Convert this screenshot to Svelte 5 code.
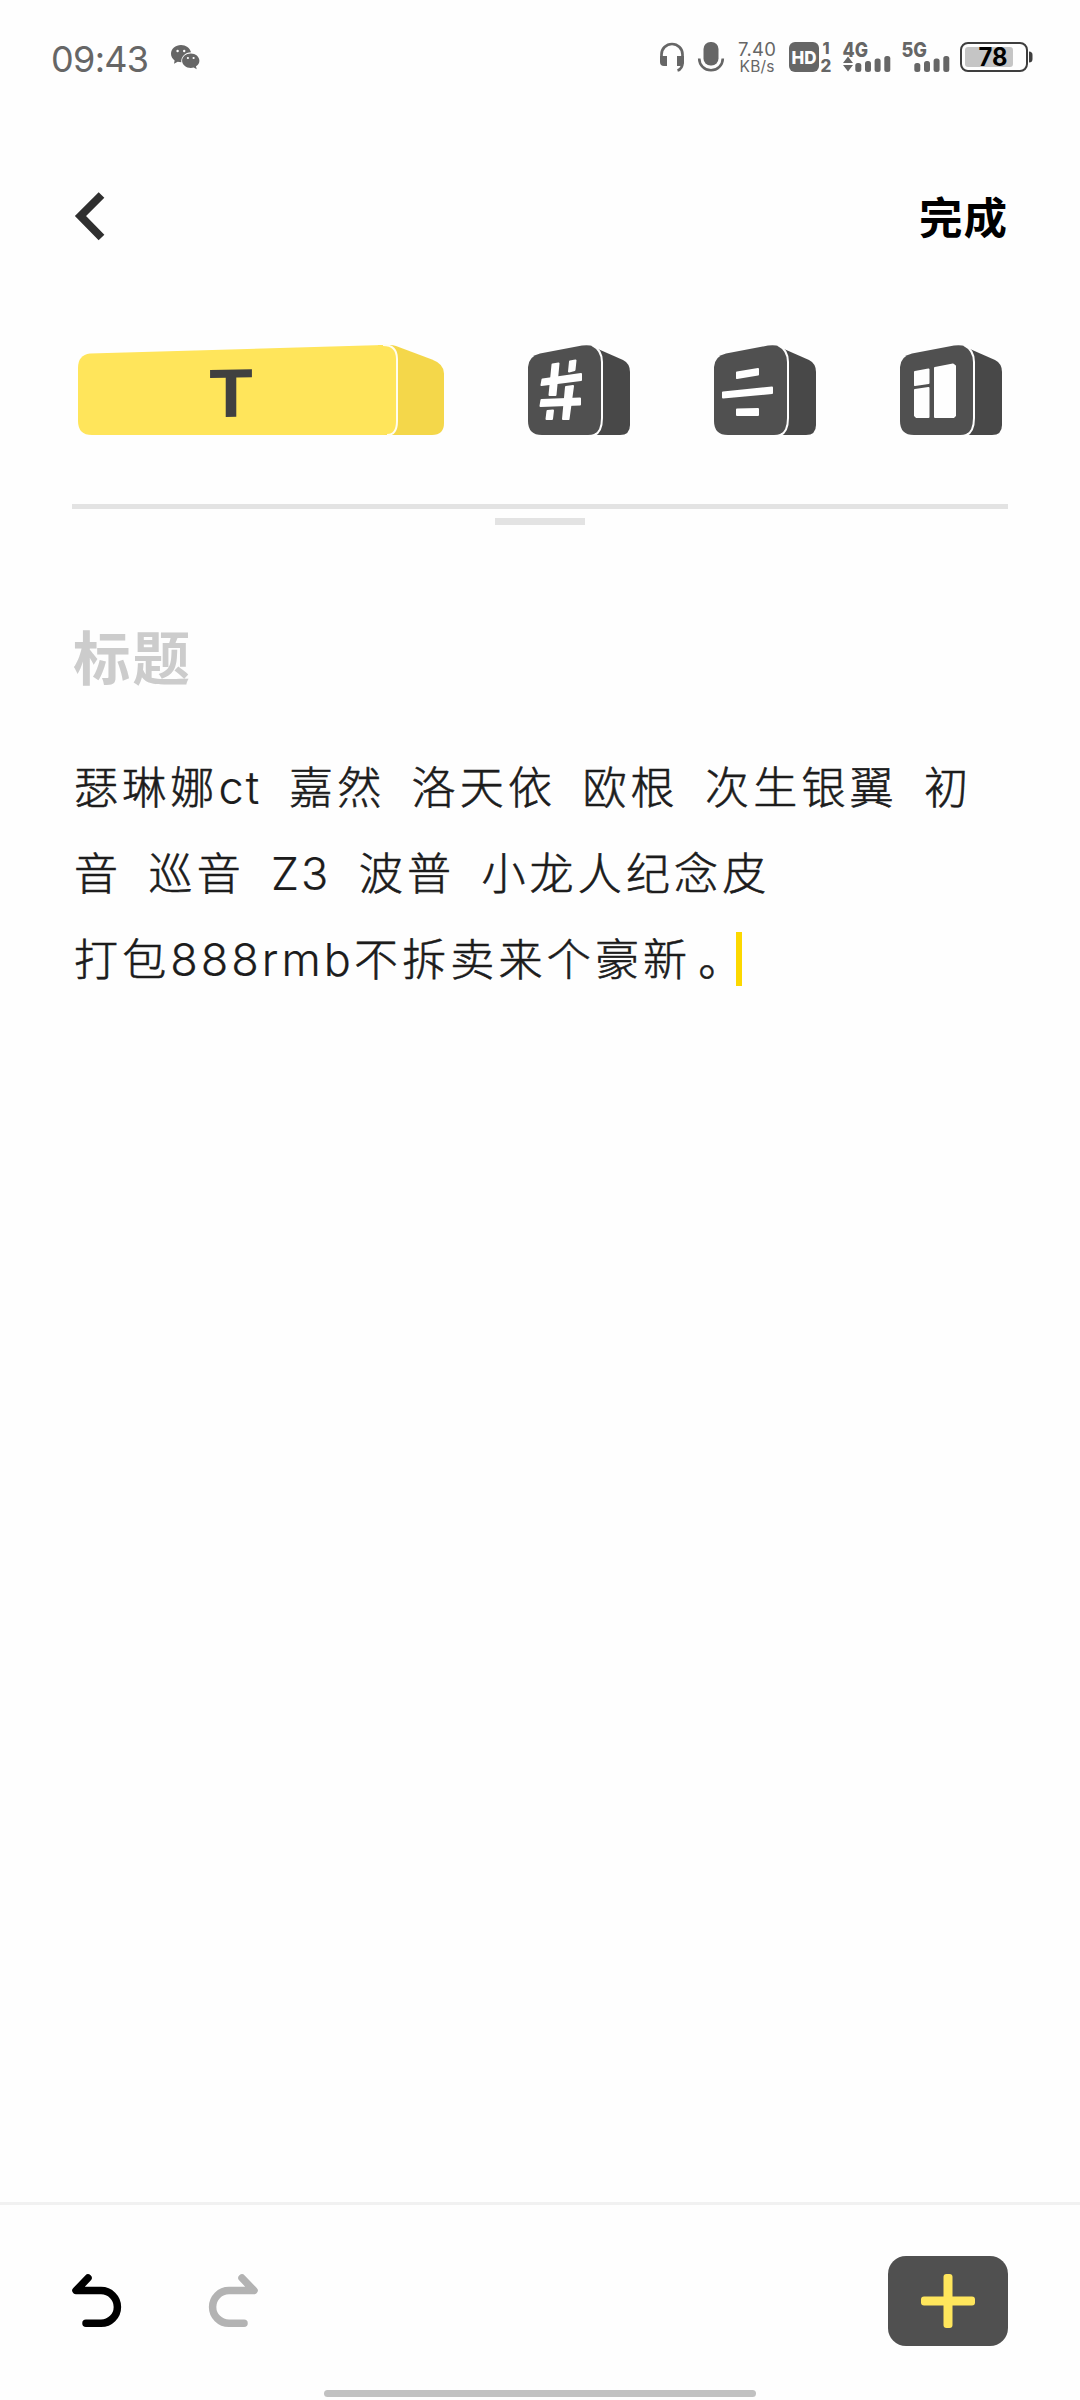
<script lang="ts">
	interface Signal {
		label: string;
		arrows: boolean;
	}

	const signals: Signal[] = [
		{ label: '4G', arrows: true },
		{ label: '5G', arrows: false }
	];

	const blocks = ['tag', 'align', 'layout'];

	let title = $state('');
	let battery = $state(78);
</script>

<div class="screen">
	<header class="status">
		<span class="time">09:43</span>
		<svg class="wechat" width="29" height="25" viewBox="0 0 29 25">
			<path
				d="M10 0C4.500 0 0 3.900 0 8.800c0 2.700 1.400 5 3.600 6.600L3 18.800l3.700-2c1.100.3 2.200.5 3.600.5C9.800 11.500 14.200 7.300 20 7.200 18.900 3 14.900 0 10 0z"
			/>
			<path
				d="M19.800 8.500c-4.800 0-8.700 3.200-8.700 7.200s3.900 7.200 8.700 7.200c1 0 2-.1 2.900-.4l3 1.700-.7-2.900c2.100-1.300 3.400-3.300 3.400-5.600 0-4-3.800-7.200-8.600-7.200z"
			/>
			<g class="eyes">
				<circle cx="6.600" cy="6" r="1.200" />
				<circle cx="13.200" cy="6" r="1.200" />
				<circle cx="16.900" cy="13" r="1.100" />
				<circle cx="22.600" cy="13" r="1.100" />
			</g>
		</svg>

		<div class="indicators">
			<svg width="24" height="30" viewBox="0 0 24 30">
				<path
					d="M1.500 20v-7.500a10.500 10.500 0 0 1 21 0V20c0 5-1.500 7.500-5 8.500"
					fill="none"
					stroke="#666"
					stroke-width="2.700"
				/>
				<path d="M0 14h7v10H4a4 4 0 0 1-4-4zM17 14h7v6a4 4 0 0 1-4 4h-3z" />
			</svg>
			<svg class="mic" width="26" height="30" viewBox="0 0 26 30">
				<rect x="5.500" y="0" width="15" height="23.500" rx="7" />
				<path d="M1.200 16.500a11.800 11.800 0 0 0 23.600 0" fill="none" stroke="#666" stroke-width="2.600" />
			</svg>
			<svg class="speed" width="38" height="30" viewBox="0 0 38 30">
				<text x="0" y="14" font-size="18.500" textLength="38">7.40</text>
				<text x="1.500" y="29.700" font-size="15.500" textLength="35">KB/s</text>
			</svg>
			<svg class="hd" width="43" height="30" viewBox="0 0 43 30">
				<rect width="30" height="30" rx="6" />
				<text class="inverse" x="2.500" y="21.500" font-size="18" textLength="25" lengthAdjust="spacingAndGlyphs">HD</text>
				<text x="33.500" y="12" font-size="16">1</text>
				<text x="31.500" y="30" font-size="17">2</text>
			</svg>
			{#each signals as signal}
				<svg class="signal" width="48" height="30" viewBox="0 0 48 30">
					<text x="-.5" y="14.800" font-size="20" textLength="25.500" lengthAdjust="spacingAndGlyphs">{signal.label}</text>
					{#if signal.arrows}
						<path d="M5 14.500l5 6.500H0zM5 29.500l5-6.500H0z" />
					{/if}
					<rect x="12.300" y="21" width="6" height="9" rx="2.500" />
					<rect x="22" y="19" width="6" height="11" rx="2.500" />
					<rect x="31.600" y="16.500" width="6" height="13.500" rx="2.500" />
					<rect x="41.300" y="14" width="6" height="16" rx="2.500" />
				</svg>
			{/each}
			<svg class="battery" width="73" height="30" viewBox="0 0 73 30">
				<rect x="1" y="1" width="66" height="28" rx="7" fill="#fefefe" stroke="#3e3e3e" stroke-width="2" />
				<path d="M69 9.500a3.500 3.500 0 0 1 3.500 3.500v4a3.500 3.500 0 0 1-3.500 3.500z" fill="#3e3e3e" />
				<rect x="5" y="5" width={battery * 0.615} height="20" rx="3" fill="#c5c5c5" />
				<text x="18.500" y="24.200" font-size="25" textLength="29" lengthAdjust="spacingAndGlyphs">{battery}</text>
			</svg>
		</div>
	</header>

	<nav class="topbar">
		<button aria-label="返回">
			<svg width="34" height="50" viewBox="0 0 34 50">
				<path d="M29.500 4L8.500 25l21 21.500" fill="none" stroke="#2f2f2f" stroke-width="8" />
			</svg>
		</button>
		<button class="done">完成</button>
	</nav>

	<div class="blocks">
		<svg class="wide" width="366" height="90" viewBox="0 0 366 90">
			<path
				d="M300 0h12q3 0 6 1l36 13.500q12 4.500 12 14V78q0 12-12 12h-54z"
				fill="#f4d74a"
			/>
			<path
				d="M12 8.500L305 0q14 0 14 14v62q0 14-14 14H14Q0 90 0 76V23Q0 10 12 8.500z"
				fill="#ffe55b"
			/>
			<path
				d="M305 0q14 0 14 14v62q0 14-10 14"
				fill="none"
				stroke="#fffdf0"
				stroke-width="2"
			/>
			<text x="129.500" y="74.500" textLength="47" lengthAdjust="spacingAndGlyphs" transform="skewY(-1)">T</text>
		</svg>

		{#each blocks as block}
			<svg width="102" height="90" viewBox="0 0 102 90">
				<path d="M70 4l25 11q7 3.500 7 12v53q0 10-10 10H68z" fill="#484848" />
				<path
					d="M12 8.500L54 .5Q74-2 74 16v58q0 16-14 16H14Q0 90 0 76V22Q1 11 12 8.500z"
					fill="#505050"
				/>
				<path
					d="M64 0Q74 5 74 17v56q0 14-8 17.500"
					fill="none"
					stroke="#fefefe"
					stroke-width="2"
				/>
				{#if block === 'tag'}
					<g fill="#fefefe" stroke="#fefefe" stroke-width="2" stroke-linejoin="round">
						<path d="M24.500 19.500l6-1-3 31.500h-6z" />
						<path d="M42 16.500l5.500-1-1 9.500-5.500 1.500z" />
						<path d="M38 42l7-1-4.500 33h-5.500z" />
						<path d="M19.500 66l5.500-.5-1 8.500h-5.500z" />
						<path d="M14.500 34.500L53 29v6l-39.500 5z" />
						<path d="M13.500 55L52 53.500v6l-39.500 1.500z" />
					</g>
				{:else if block === 'align'}
					<g fill="#fefefe" stroke="#fefefe" stroke-width="2" stroke-linejoin="round">
						<path d="M23 27.500l21-3.500v5.500l-21 3.500z" />
						<path d="M9 47.500L58 42.500v5.500L9 52.500z" />
						<path d="M23 64.500l21-.5v6H23z" />
					</g>
				{:else}
					<g fill="#fefefe" stroke="#fefefe" stroke-width="2" stroke-linejoin="round">
						<path d="M15 27l13.500-2.500V38L15 40z" />
						<path d="M15 45l13.500-2v29H16.500L15 70.500z" />
						<path d="M35 23l18-3.500 2 1.500v49.500L53.500 72H35z" />
					</g>
				{/if}
			</svg>
		{/each}
	</div>

	<div class="divider"></div>
	<div class="handle"></div>

	<main>
		<input class="title" placeholder="标题" bind:value={title} />
		<div class="note">
			<p>瑟琳娜<span class="latin ct">ct</span>{'  嘉然  洛天依  欧根  次生银翼  初'}</p>
			<p>{'音  巡音  '}<span class="latin z">Z3</span>{'  波普  小龙人纪念皮'}</p>
			<p>打包<span class="latin rmb">888rmb</span>不拆卖来个豪新<span class="stop">。</span><i class="caret"></i></p>
		</div>
	</main>

	<footer>
		<button aria-label="撤销">
			<svg width="49" height="54" viewBox="0 0 49 54">
				<path d="M16 4L4 16.500h25a16.300 16.300 0 0 1 0 32.800H14" class="arrow" />
			</svg>
		</button>
		<button class="redo" aria-label="重做">
			<svg width="49" height="54" viewBox="0 0 49 54">
				<path d="M33 4l12 12.500H20a16.300 16.300 0 0 0 0 32.800h15" class="arrow" />
			</svg>
		</button>
		<button class="add" aria-label="添加">
			<svg width="54" height="54" viewBox="0 0 54 54">
				<rect x="22.500" width="9" height="54" rx="3" />
				<rect y="22.500" width="54" height="9" rx="3" />
			</svg>
		</button>
	</footer>
	<div class="home"></div>
</div>

<style>
	:global(body) {
		margin: 0;
		background: #fefefe;
	}

	.screen {
		display: flex;
		flex-direction: column;
		box-sizing: border-box;
		width: 1080px;
		height: 2400px;
		background: #fefefe;
		font-family: 'Noto Sans CJK SC', sans-serif;
	}

	svg {
		display: block;
		flex: none;
		overflow: visible;
	}

	button {
		border: 0;
		padding: 0;
		background: none;
		font: inherit;
		color: inherit;
	}

	.status {
		display: flex;
		align-items: flex-start;
		box-sizing: border-box;
		height: 116px;
		padding: 42px 47px 0 51px;
		color: #666;
		fill: #666;
		font-family: Inter, sans-serif;
	}

	.time {
		width: 120px;
		font-size: 36px;
		line-height: 34px;
		letter-spacing: -0.7px;
	}

	.wechat {
		margin-top: 3px;
	}

	.eyes {
		fill: #fefefe;
	}

	.indicators {
		display: flex;
		margin-left: auto;
	}

	.mic {
		margin-left: 14px;
	}

	.speed {
		margin-left: 14px;
	}

	.hd {
		margin-left: 13px;
		font-weight: 800;
	}

	.inverse {
		fill: #fefefe;
	}

	.signal {
		margin-left: 11px;
		font-weight: 800;
	}

	.battery {
		margin-left: 10px;
		font-weight: 700;
	}

	.battery text {
		fill: #000;
	}

	.topbar {
		display: flex;
		align-items: center;
		justify-content: space-between;
		height: 200px;
		padding: 0 72px;
	}

	.done {
		font-size: 43.500px;
		font-weight: 700;
		line-height: 60px;
		letter-spacing: 1px;
		color: #000;
	}

	.blocks {
		display: flex;
		gap: 84px;
		padding: 29px 78px 0;
	}

	.wide text {
		font: 700 65px Inter, sans-serif;
		fill: #404040;
	}

	.divider {
		height: 5px;
		margin: 69px 72px 0;
		background: #e3e3e3;
	}

	.handle {
		width: 90px;
		height: 7px;
		margin: 9px auto 0;
		background: #e3e3e3;
	}

	main {
		flex: 1;
		padding: 90px 71px 0 73px;
	}

	.title {
		display: block;
		width: 100%;
		height: 80px;
		border: 0;
		padding: 0;
		outline: 0;
		background: none;
		font: 700 57.500px 'Noto Sans CJK SC', sans-serif;
		letter-spacing: 2px;
	}

	.title::placeholder {
		color: #ccc;
		opacity: 1;
	}

	.note {
		margin-top: 47px;
		padding-left: 1px;
		font-size: 44px;
		font-weight: 300;
		line-height: 86px;
		letter-spacing: 4.17px;
		word-spacing: -0.75px;
		color: #1c1c1c;
		-webkit-text-stroke: 0.6px #1c1c1c;
	}

	p {
		height: 86px;
		margin: 0;
		white-space: pre;
	}

	.latin {
		display: inline-block;
		font-family: Inter, sans-serif;
		font-size: 45px;
		line-height: 1;
		letter-spacing: 2px;
		-webkit-text-stroke: 0.2px #1c1c1c;
	}

	.ct {
		width: 44.200px;
	}

	.z {
		width: 61.400px;
	}

	.rmb {
		width: 183.700px;
		letter-spacing: 3px;
	}

	.stop {
		margin-left: 7px;
	}

	.caret {
		display: inline-block;
		width: 6px;
		height: 54px;
		margin-left: -10px;
		vertical-align: -10px;
		background: #fcd800;
	}

	footer {
		display: flex;
		align-items: center;
		box-sizing: border-box;
		height: 188px;
		border-top: 3px solid #f1f1f1;
		padding: 7px 72px 0;
	}

	.arrow {
		fill: none;
		stroke: #000;
		stroke-width: 7.5px;
		stroke-linecap: round;
		stroke-linejoin: round;
	}

	.redo {
		margin-left: 88px;
	}

	.redo .arrow {
		stroke: #b3b3b3;
	}

	.add {
		display: flex;
		align-items: center;
		justify-content: center;
		width: 120px;
		height: 90px;
		margin-left: auto;
		border-radius: 18px;
		background: #505050;
		fill: #ffe65c;
	}

	.home {
		width: 432px;
		height: 7px;
		margin: 0 auto 3px;
		border-radius: 4px;
		background: #c1c1c1;
	}
</style>
